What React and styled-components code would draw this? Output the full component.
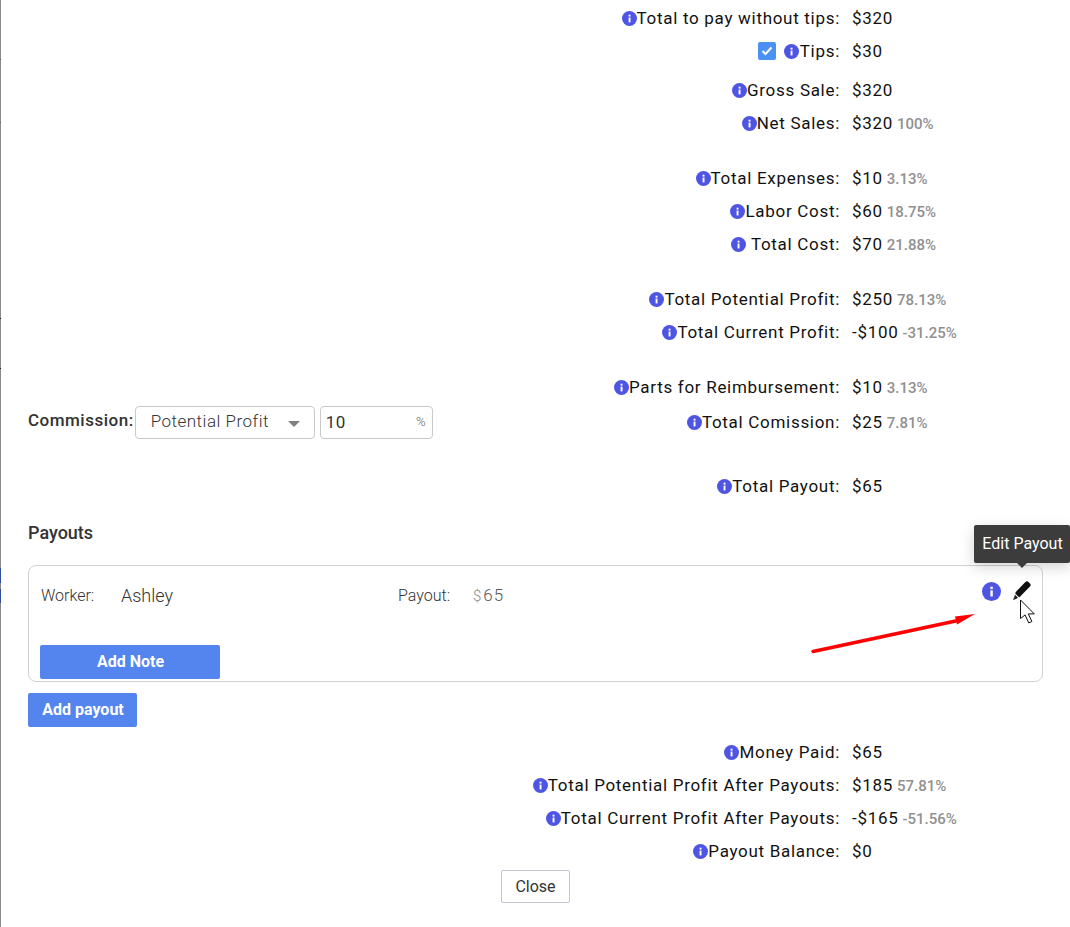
import React from 'react';
import styled, { createGlobalStyle } from 'styled-components';

const GlobalStyle = createGlobalStyle`
  html, body { margin: 0; padding: 0; background: #fff; }
  body { font-family: Roboto, "Liberation Sans", sans-serif; color: #212121; }
`;

const Page = styled.div`
  position: relative;
  width: 1070px;
  height: 927px;
  overflow: hidden;
  box-sizing: border-box;
  padding: 1px 27px 0 28px;

  /* sliver of the page behind the modal */
  &::before {
    content: '';
    position: absolute;
    left: 0;
    top: 0;
    bottom: 0;
    width: 1px;
    background: linear-gradient(
      to bottom,
      #8a8a8a 0 59px, #5a5a5a 59px 60px,
      #8a8a8a 60px 122px, #5a5a5a 122px 123px,
      #8a8a8a 123px 318px, #222 318px 319px,
      #8a8a8a 319px 368px, #222 368px 369px,
      #8a8a8a 369px 568px, #2a4f97 568px 583px,
      #8a8a8a 583px 589px, #2a4f97 589px 603px,
      #8a8a8a 603px
    );
  }
`;

const Row = styled.div`
  display: flex;
  align-items: center;
  height: 33px;
  margin-top: ${({ $gap }) => $gap || 0}px;
`;

const LabelCell = styled.div`
  width: 812px;
  flex: none;
  display: flex;
  align-items: center;
  justify-content: flex-end;
  font-size: 17px;
  letter-spacing: 0.7px;
  color: #111;
`;

const ValueCell = styled.div`
  margin-left: 12px;
  font-size: 17px;
  letter-spacing: 0.7px;
  color: #111;
  display: flex;
  align-items: baseline;
`;

const Percent = styled.span`
  margin-left: 4px;
  font-size: 15px;
  font-weight: 500;
  letter-spacing: 0;
  color: #909090;
`;

const InfoDot = styled.svg`
  flex: none;
  width: ${({ $size }) => $size || 15}px;
  height: ${({ $size }) => $size || 15}px;
  margin-top: 2px;
  margin-right: ${({ $after }) => $after || 0}px;
`;

const PenIcon = styled.svg`
  flex: none;
  margin-top: 1px;
`;

const Check = styled.span`
  width: 18px;
  height: 18px;
  background: #4a90f5;
  border-radius: 2px;
  display: flex;
  align-items: center;
  justify-content: center;
  margin-right: 8px;
`;

const Commission = styled.div`
  display: flex;
  align-items: center;
  margin-right: auto;
  margin-top: 2px;
`;

const CommissionLabel = styled.span`
  font-size: 17px;
  font-weight: 500;
  letter-spacing: 0.5px;
  color: #333;
  margin-right: 1px;
  margin-bottom: 6px;
`;

const Select = styled.div`
  width: 180px;
  height: 33px;
  box-sizing: border-box;
  border: 1px solid #c9c9c9;
  border-radius: 4px;
  display: flex;
  align-items: center;
  justify-content: space-between;
  padding: 0 14px 3px 15px;
  font-size: 17px;
  font-weight: 300;
  letter-spacing: 0.5px;
  color: #333;
`;

const Caret = styled.span`
  width: 0;
  height: 0;
  border-left: 6px solid transparent;
  border-right: 6px solid transparent;
  border-top: 6px solid #808080;
  margin-top: 5px;
`;

const PercentInput = styled.div`
  width: 113px;
  height: 33px;
  margin-left: 5px;
  box-sizing: border-box;
  border: 1px solid #c9c9c9;
  border-radius: 4px;
  display: flex;
  align-items: center;
  justify-content: space-between;
  padding: 0 6px 2px 5px;
  font-size: 17px;
  letter-spacing: 0.5px;
  color: #333;

  small {
    font-size: 13px;
    font-weight: 300;
    letter-spacing: 0;
    color: #666;
  }
`;

const SectionTitle = styled.h3`
  margin: 19px 0 0;
  height: 24px;
  line-height: 24px;
  font-size: 18px;
  font-weight: 500;
  color: #333;
`;

const PayoutCard = styled.div`
  margin-top: 20px;
  height: 117px;
  box-sizing: border-box;
  border: 1px solid #d2d2d2;
  border-radius: 8px;
  padding: 0 11px 2px;
  display: flex;
  flex-direction: column;
  justify-content: space-between;
`;

const CardTop = styled.div`
  display: flex;
  align-items: center;
  height: 58px;
  padding-left: 1px;
`;

const FieldLabel = styled.span`
  font-size: 16px;
  font-weight: 300;
  color: #333;
  width: ${({ $w }) => $w}px;
`;

const WorkerName = styled.span`
  font-size: 18px;
  font-weight: 300;
  color: #333;
  width: 277px;
`;

const Money = styled.span`
  font-size: 17px;
  font-weight: 300;
  letter-spacing: 1px;
  color: #555;
  small { font-size: 15px; color: #888; margin-right: 1px; }
`;

const CardActions = styled.div`
  margin-left: auto;
  display: flex;
  align-items: center;
  gap: 12px;
  margin-top: -10px;
`;

const BlueButton = styled.button`
  display: block;
  height: 34px;
  width: ${({ $w }) => $w}px;
  border: 0;
  border-radius: 2px;
  background: #5484ed;
  color: #fff;
  font-family: inherit;
  font-size: 16px;
  font-weight: 700;
  padding: 0 0 2px 1px;
`;

const AddPayout = styled(BlueButton)`
  margin-top: 11px;
  margin-bottom: 8px;
`;

const CloseRow = styled.div`
  display: flex;
  justify-content: center;
  margin-top: 3px;
  padding-right: 1px;
`;

const CloseButton = styled.button`
  width: 69px;
  height: 33px;
  background: #fff;
  border: 1px solid #c2c6d0;
  border-radius: 2px;
  font-family: inherit;
  font-size: 16px;
  color: #333;
  padding: 0 0 0 1px;
`;

const Tooltip = styled.div`
  position: absolute;
  left: 974px;
  top: 525px;
  width: 96px;
  height: 38px;
  box-sizing: border-box;
  padding: 0 0 2px 1px;
  background: #3c3c3c;
  border-radius: 2px;
  color: #fff;
  font-size: 16px;
  display: flex;
  align-items: center;
  justify-content: center;
  box-shadow: 0 4px 14px rgba(0, 0, 0, 0.18);

  &::after {
    content: '';
    position: absolute;
    left: 43px;
    bottom: -5px;
    border-left: 5px solid transparent;
    border-right: 5px solid transparent;
    border-top: 5px solid #3c3c3c;
  }
`;

const Overlay = styled.svg`
  position: absolute;
  left: 0;
  top: 0;
  pointer-events: none;
`;

const Info = ({ size, after }) => (
  <InfoDot $size={size} $after={after} viewBox="0 0 15 15">
    <circle cx="7.5" cy="7.5" r="7.5" fill="#4f55e3" />
    <rect x="6.6" y="6.6" width="1.9" height="4.8" fill="#fff" />
    <rect x="6.6" y="3.7" width="1.9" height="1.9" fill="#fff" />
  </InfoDot>
);

const Summary = ({ label, value, pct, gap, check, children }) => (
  <Row $gap={gap}>
    <LabelCell>
      {children}
      {check && (
        <Check>
          <svg width="12" height="10" viewBox="0 0 12 10">
            <path d="M1.5 5l3 3 6-6.5" fill="none" stroke="#fff" strokeWidth="2" />
          </svg>
        </Check>
      )}
      <Info after={check ? 1 : 0} />
      {label}
    </LabelCell>
    <ValueCell>
      {value}
      {pct && <Percent>{pct}</Percent>}
    </ValueCell>
  </Row>
);

export default function App() {
  return (
    <Page>
      <GlobalStyle />
      <Summary label="Total to pay without tips:" value="$320" />
      <Summary label="Tips:" value="$30" check />
      <Summary label="Gross Sale:" value="$320" gap={6} />
      <Summary label="Net Sales:" value="$320" pct="100%" />
      <Summary label="Total Expenses:" value="$10" pct="3.13%" gap={22} />
      <Summary label="Labor Cost:" value="$60" pct="18.75%" />
      <Summary label={'\u00a0Total Cost:'} value="$70" pct="21.88%" />
      <Summary label="Total Potential Profit:" value="$250" pct="78.13%" gap={22} />
      <Summary label="Total Current Profit:" value="-$100" pct="-31.25%" />
      <Summary label="Parts for Reimbursement:" value="$10" pct="3.13%" gap={22} />
      <Summary label="Total Comission:" value="$25" pct="7.81%" gap={2}>
        <Commission>
          <CommissionLabel>Commission:</CommissionLabel>
          <Select>
            Potential Profit
            <Caret />
          </Select>
          <PercentInput>
            10
            <small>%</small>
          </PercentInput>
        </Commission>
      </Summary>
      <Summary label="Total Payout:" value="$65" gap={31} />
      <SectionTitle>Payouts</SectionTitle>
      <PayoutCard>
        <CardTop>
          <FieldLabel $w={80}>Worker:</FieldLabel>
          <WorkerName>Ashley</WorkerName>
          <FieldLabel $w={75}>Payout:</FieldLabel>
          <Money>
            <small>$</small>65
          </Money>
          <CardActions>
            <Info size={19} />
            <PenIcon width="18" height="20" viewBox="0 0 18 20">
              <path d="M12.4 1c1-.9 2.1-.9 3 0l1.6 1.6c.9.9.9 2 0 3L7.2 15.6 6 16.2 2.2 12.4l.6-1.4z" fill="#111" />
              <path d="M1.9 13.6l3.1 3.2-1.6.9-2.9 1.3-.3-.4 1.2-2.9z" fill="#222" />
            </PenIcon>
          </CardActions>
        </CardTop>
        <BlueButton $w={180}>Add Note</BlueButton>
      </PayoutCard>
      <AddPayout $w={109}>Add payout</AddPayout>
      <Summary label="Money Paid:" value="$65" />
      <Summary label="Total Potential Profit After Payouts:" value="$185" pct="57.81%" />
      <Summary label="Total Current Profit After Payouts:" value="-$165" pct="-51.56%" />
      <Summary label="Payout Balance:" value="$0" />
      <CloseRow>
        <CloseButton>Close</CloseButton>
      </CloseRow>
      <Tooltip>Edit Payout</Tooltip>
      <Overlay width="1070" height="927" viewBox="0 0 1070 927">
        <path d="M813 651.5L958 620.5" stroke="#f00" strokeWidth="3.5" strokeLinecap="round" />
        <path d="M975 614L957 624.5 955 616.5z" fill="#f00" />
        <path
          d="M1020.5 600v18.5l4.6-3.6 3.6 8 3.2-1.4-3.6-7.6h6z"
          fill="#fff"
          stroke="#111"
          strokeWidth="1"
        />
      </Overlay>
    </Page>
  );
}
